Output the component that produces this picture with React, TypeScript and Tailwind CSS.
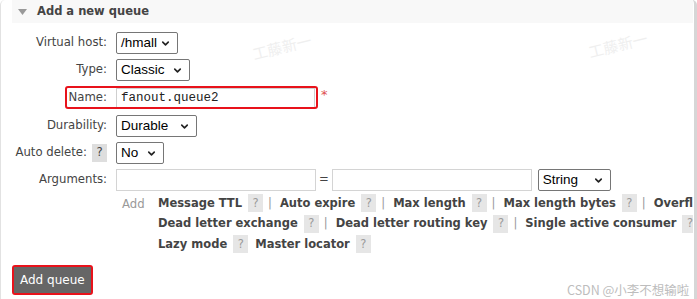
import { ChevronDown } from 'lucide-react';

type Arg = { label: string; sep?: boolean };

const argRows: Arg[][] = [
  [
    { label: 'Message TTL', sep: true },
    { label: 'Auto expire', sep: true },
    { label: 'Max length', sep: true },
    { label: 'Max length bytes', sep: true },
    { label: 'Overflow behaviour' },
  ],
  [
    { label: 'Dead letter exchange', sep: true },
    { label: 'Dead letter routing key', sep: true },
    { label: 'Single active consumer', sep: true },
    { label: 'Maximum priority' },
  ],
  [{ label: 'Lazy mode' }, { label: 'Master locator' }],
];

function Select({ value, width }: { value: string; width: string }) {
  return (
    <div
      className={`flex h-[22px] ${width} items-center justify-between rounded-[2px] border border-[#767676] bg-white pl-[4px] pr-[6px] font-['Liberation_Sans',sans-serif] text-[13.5px] text-black`}
    >
      <span>{value}</span>
      <ChevronDown size={11} strokeWidth={3.5} className="text-[#222]" />
    </div>
  );
}

function Help({ dark }: { dark?: boolean }) {
  return (
    <span
      className={`inline-flex h-[18px] w-[15px] items-center justify-center ${
        dark ? 'bg-[#dedede] text-[#444]' : 'bg-[#e6e6e6] font-normal text-[#9a9a9a]'
      }`}
    >
      ?
    </span>
  );
}

function Row({ label, extra, children }: { label: string; extra?: React.ReactNode; children: React.ReactNode }) {
  return (
    <div className="flex items-center">
      <div className="flex w-[115px] items-center justify-end gap-[5px] pr-[9px] text-[#444]">
        <span>{label}</span>
        {extra}
      </div>
      {children}
    </div>
  );
}

function Watermark({ className }: { className: string }) {
  return (
    <span
      className={`pointer-events-none absolute -rotate-[14deg] font-['Noto_Sans_CJK_SC',sans-serif] text-[15px] text-[#efefef] ${className}`}
    >
      工藤新一
    </span>
  );
}

export default function App() {
  return (
    <div className="relative h-[299px] w-[697px] overflow-hidden bg-white font-['DejaVu_Sans',sans-serif] text-[11.7px]">
      <div className="h-full rounded-t-[5px] border-l border-r-[3px] border-l-[#e2e2e2] border-r-[#d6d6d6] pr-[1px]">
        <div className="ml-[11px] flex h-[23px] items-center bg-[#f8f8f8] pl-[6px]">
          <svg width="9" height="6" viewBox="0 0 9 6" className="mt-[1px]">
            <path d="M0 0H9L4.5 6Z" fill="#999" />
          </svg>
          <span className="ml-[10px] text-[11.5px] font-bold text-[#444]">Add a new queue</span>
        </div>

        <div className="flex flex-col gap-[5px] pt-[9px]">
          <Row label="Virtual host:">
            <Select value="/hmall" width="w-[62px]" />
          </Row>
          <Row label="Type:">
            <Select value="Classic" width="w-[74px]" />
          </Row>
          <div className="relative flex items-center py-[2px]">
            <div className="flex w-[115px] justify-end pr-[9px] text-[#444]">Name:</div>
            <div className="flex h-[20px] w-[199px] items-center border border-[#cfcfcf] pl-[4px] font-['Liberation_Mono',monospace] text-[12.5px] text-[#222]">
              fanout.queue2
            </div>
            <span className="ml-[6px] -mt-[6px] text-[13px] text-[#e05050]">*</span>
            <div className="pointer-events-none absolute left-[64px] top-0 h-[23px] w-[253px] rounded-[3px] border-2 border-[#e8121b]" />
          </div>
          <Row label="Durability:">
            <Select value="Durable" width="w-[81px]" />
          </Row>
          <Row label="Auto delete:" extra={<Help dark />}>
            <Select value="No" width="w-[48px]" />
          </Row>
          <Row label="Arguments:">
            <div className="h-[22px] w-[200px] border border-[#d4d4d4]" />
            <span className="mx-[3px] text-[#444]">=</span>
            <div className="h-[22px] w-[200px] border border-[#d4d4d4]" />
            <div className="ml-[6px]">
              <Select value="String" width="w-[73px]" />
            </div>
          </Row>
        </div>

        <div className="mt-[3px] flex">
          <div className="w-[157px] pl-[121px] pt-[2px] text-[#999]">Add</div>
          <div className="flex min-w-0 flex-1 flex-col gap-[2px] overflow-hidden">
            {argRows.map((row, i) => (
              <div key={i} className="flex h-[18.5px] items-center whitespace-nowrap text-[11.5px] font-bold text-[#444]">
                {row.map((a) => (
                  <span key={a.label} className="flex items-center">
                    <span>{a.label}</span>
                    <span className="ml-[6px]">
                      <Help />
                    </span>
                    {a.sep ? (
                      <span className="ml-[5px] mr-[8px] font-normal text-[#999]">|</span>
                    ) : (
                      <span className="w-[7px]" />
                    )}
                  </span>
                ))}
              </div>
            ))}
          </div>
        </div>

        <div className="ml-[11px] mt-[11px] inline-flex rounded-[3px] border-2 border-[#e8121b]">
          <div className="flex h-[26px] items-center bg-[#666] px-[6px] text-[12px] text-white">Add queue</div>
        </div>
      </div>

      <Watermark className="left-[252px] top-[36px]" />
      <Watermark className="left-[588px] top-[34px]" />
      <span className="pointer-events-none absolute left-[567px] top-[281px] font-['Noto_Sans_CJK_SC',sans-serif] text-[12.5px] text-[#bdbdbd]">
        CSDN @小李不想输啦
      </span>
    </div>
  );
}
